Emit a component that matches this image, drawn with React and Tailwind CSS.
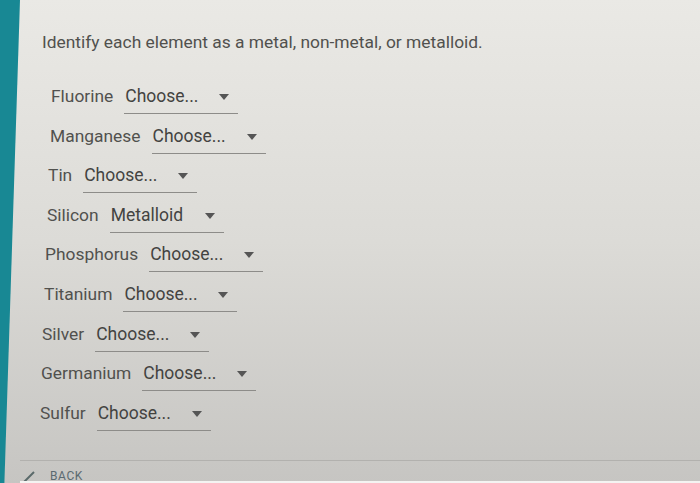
import { useState } from "react";

/* rows drift left a little, like the photo */
const rows = [
  { name: "Fluorine", value: "Choose...", ml: "ml-[31px]" },
  { name: "Manganese", value: "Choose...", ml: "ml-[30px]" },
  { name: "Tin", value: "Choose...", ml: "ml-[28px]" },
  { name: "Silicon", value: "Metalloid", ml: "ml-[27px]" },
  { name: "Phosphorus", value: "Choose...", ml: "ml-[25px]" },
  { name: "Titanium", value: "Choose...", ml: "ml-[24px]" },
  { name: "Silver", value: "Choose...", ml: "ml-[22px]" },
  { name: "Germanium", value: "Choose...", ml: "ml-[21px]" },
  { name: "Sulfur", value: "Choose...", ml: "ml-[20px]" },
];

function Select({ value }) {
  return (
    <div className="relative w-[114px] border-b border-[#8d8c89] pb-[4px] pl-[1px]">
      <span className="text-[17.5px] leading-6 text-[#434341]">{value}</span>
      <svg
        width="10"
        height="6"
        viewBox="0 0 10 6"
        className="absolute right-[9px] top-[10px]"
      >
        <path d="M0 0h10L5 6z" fill="#555" />
      </svg>
    </div>
  );
}

function Row({ name, value, ml }) {
  const [val] = useState(value);
  return (
    <div className={`flex items-start gap-[11px] h-[39.6px] ${ml}`}>
      <span className="text-[17.4px] leading-6 text-[#51514e]">{name}</span>
      <Select value={val} />
    </div>
  );
}

export default function App() {
  return (
    <div
      className="flex h-[483px] w-full overflow-hidden bg-gradient-to-b from-[#eae9e5] via-[#dcdbd7] to-[#c6c5c2]"
      style={{ fontFamily: "Roboto, 'Open Sans', sans-serif" }}
    >
      <div className="w-[20px] shrink-0 bg-[#188894] [clip-path:polygon(0_0,100%_0,22%_100%,0_100%)]" />
      <div className="flex-1 flex flex-col">
        <p className="ml-[22px] mt-[30px] text-[17.4px] leading-6 text-[#51514e]">
          Identify each element as a metal, non-metal, or metalloid.
        </p>
        <div className="mt-[30px] flex flex-col">
          {rows.map((r) => (
            <Row key={r.name} {...r} />
          ))}
        </div>
        <div className="mt-auto border-t border-[#b2b1ae] h-[20px] flex items-end gap-[14px] pl-[2px] mb-[1px]">
          <svg width="14" height="12" viewBox="0 0 14 12" className="mb-[-2px]">
            <path d="M2 12L12 2" stroke="#5a6a6a" strokeWidth="2" fill="none" />
          </svg>
          <span className="text-[12px] leading-none tracking-wider text-[#5a6a70] translate-y-[2px]">
            BACK
          </span>
        </div>
        <div className="h-[2px] bg-[#f4f4f2]" />
      </div>
    </div>
  );
}
